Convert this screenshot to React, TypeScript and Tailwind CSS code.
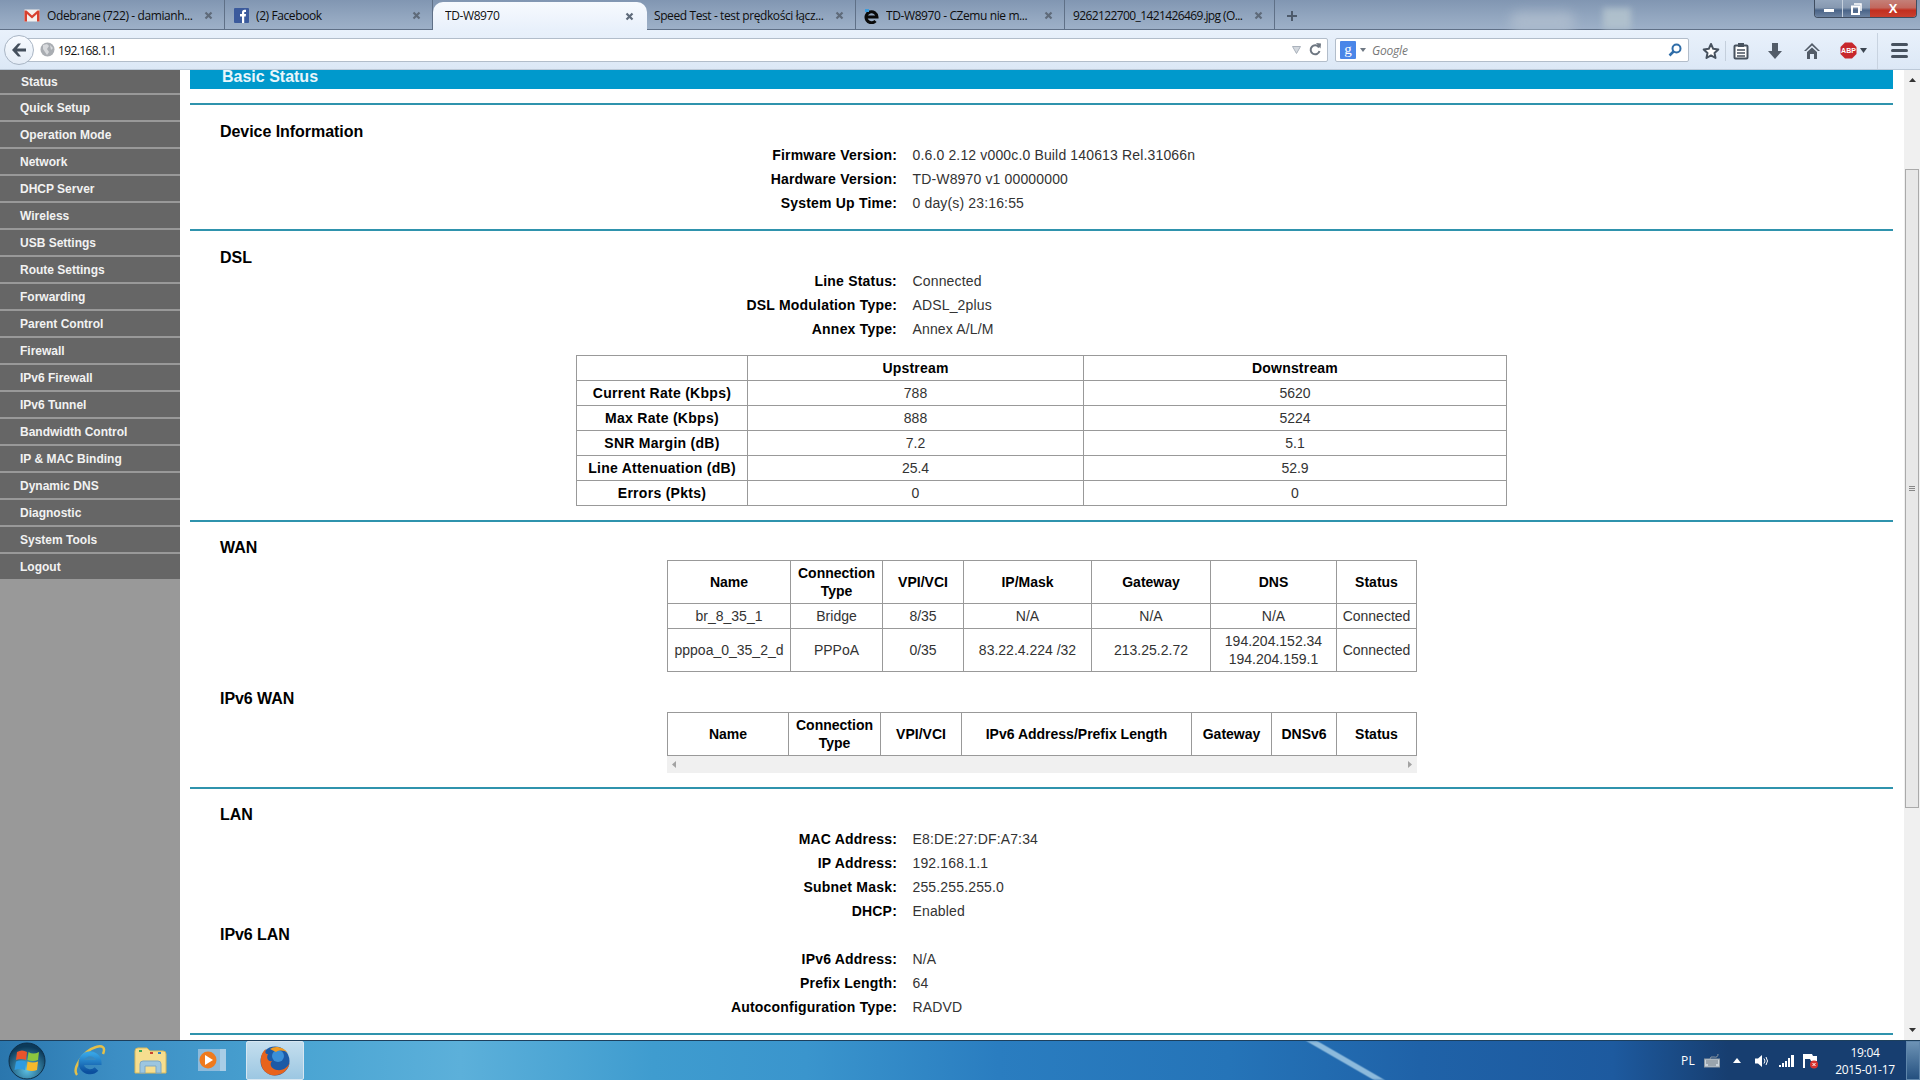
const menu = ['Status', 'Quick Setup', 'Operation Mode', 'Network', 'DHCP Server', 'Wireless', 'USB Settings', 'Route Settings', 'Forwarding', 'Parent Control', 'Firewall', 'IPv6 Firewall', 'IPv6 Tunnel', 'Bandwidth Control', 'IP & MAC Binding', 'Dynamic DNS', 'Diagnostic', 'System Tools', 'Logout'];

const Gmail = () => (
  <svg width="16" height="13" viewBox="0 0 16 13">
    <rect x="0.5" y="0.5" width="15" height="12" fill="#f4f0ee" />
    <path d="M0.5 12.5V1.5H2.5L8 6.5L13.5 1.5H15.5V12.5H13V5L8 9.5L3 5V12.5Z" fill="#d8402f" />
  </svg>
);

const Facebook = () => (
  <svg width="15" height="15" viewBox="0 0 15 15">
    <rect width="15" height="15" rx="1" fill="#3b5a9c" />
    <path d="M8 15V8.5H6V6H8V4.4C8 2.6 9 1.8 10.5 1.8H12V4H11C10.3 4 10.2 4.3 10.2 4.9V6H12L11.7 8.5H10.2V15Z" fill="#fff" />
  </svg>
);

const IeTab = () => (
  <svg width="15" height="16" viewBox="0 0 15 16">
    <path d="M2.5 9H13A5.5 5.5 0 1 0 11.5 13" fill="none" stroke="#0a0a0a" strokeWidth="3" />
    <rect x="1" y="1" width="4" height="3" fill="#3b9bdc" />
  </svg>
);

const Close = () => (
  <svg width="9" height="9" viewBox="0 0 9 9" className="shrink-0">
    <path d="M1.5 1.5L7.5 7.5M7.5 1.5L1.5 7.5" stroke="#5f6b7a" strokeWidth="2.2" />
  </svg>
);

const tabs = [
  { title: 'Odebrane (722) - damianh...', w: 'w-[225px] pl-[24px] tracking-[-0.4px]', icon: <Gmail /> },
  { title: '(2) Facebook', w: 'w-[208px] pl-[9px] tracking-[-0.4px]', icon: <Facebook /> },
  { title: 'TD-W8970', w: 'w-[214px] pl-[12px] tracking-[-0.4px]', active: true },
  { title: 'Speed Test - test prędkości łącz...', w: 'w-[209px] pl-[7px] tracking-[-0.4px]' },
  { title: 'TD-W8970 - CZemu nie m...', w: 'w-[209px] pl-[8px] tracking-[-0.4px]', icon: <IeTab /> },
  { title: '9262122700_1421426469.jpg (O...', w: 'w-[210px] pl-[8px] tracking-[-0.6px]' },
];

const TitleBar = () => (
  <div className="relative flex h-[30px] shrink-0 border-b border-[#5f7087] bg-[linear-gradient(180deg,#8196b2_0%,#93a7c0_60%,#9db0c8_100%)] text-[12px] [font-family:'Open_Sans',sans-serif]">
    <div className="absolute left-[1510px] top-[12px] h-[20px] w-[65px] rounded-full bg-[#b4c1d0] opacity-70 blur-[6px]" />
    <div className="absolute left-[1603px] top-[8px] h-[21px] w-[28px] bg-[#b6c6cf] opacity-80 blur-[3px]" />
    {tabs.map((t) =>
      t.active ? (
        <div key={t.title} className={`relative z-10 mt-[2px] flex h-[28px] items-center gap-[6px] rounded-t-[10px] bg-[linear-gradient(180deg,#f7fafe,#e8f0fb)] pr-[13px] text-[#111] ${t.w}`}>
          <span className="flex-1 truncate">{t.title}</span>
          <Close />
        </div>
      ) : (
        <div key={t.title} className={`relative flex h-[29px] items-center gap-[7px] border-r border-[#5f7087] pr-[11px] pt-[2px] text-[#0d0d0d] ${t.w}`}>
          {t.icon}
          <span className="flex-1 truncate">{t.title}</span>
          <Close />
        </div>
      ),
    )}
    <svg width="12" height="12" viewBox="0 0 12 12" className="relative ml-[11px] mt-[10px]">
      <path d="M6 1V11M1 6H11" stroke="#4d5a6b" strokeWidth="2" />
    </svg>
    <div className="relative ml-auto mr-[3px] flex h-[18px] w-[103px] overflow-hidden rounded-b-[4px] border border-t-0 border-[#3f4d60]">
      <div className="flex w-[28px] items-center justify-center border-r border-[#c5d0dd] bg-[linear-gradient(180deg,#93a5bc_0%,#8799b1_45%,#4a6488_60%,#6d83a1_100%)]">
        <div className="mt-[4px] h-[3px] w-[10px] bg-white" />
      </div>
      <div className="flex w-[27px] items-center justify-center bg-[linear-gradient(180deg,#93a5bc_0%,#8799b1_45%,#4a6488_60%,#6d83a1_100%)]">
        <svg width="11" height="12" viewBox="0 0 11 12">
          <path d="M3 1H10V8" fill="none" stroke="#fff" strokeWidth="1.5" />
          <rect x="1" y="3.5" width="7" height="7.5" fill="none" stroke="#fff" strokeWidth="2" />
        </svg>
      </div>
      <div className="flex flex-1 items-center justify-center bg-[linear-gradient(180deg,#c48078_0%,#c2685e_45%,#c22f1f_60%,#c9402f_100%)] text-[13px] font-bold text-white [font-family:'Liberation_Sans',sans-serif]">X</div>
    </div>
  </div>
);

const ToolIcons = () => (
  <div className="flex h-full items-center pt-[2px]">
    <svg width="18" height="18" viewBox="0 0 18 18" className="ml-[13px]">
      <path d="M9 2L11.2 6.8L16.3 7.4L12.5 10.9L13.5 16L9 13.4L4.5 16L5.5 10.9L1.7 7.4L6.8 6.8Z" fill="#fff" stroke="#47525f" strokeWidth="2" strokeLinejoin="round" />
    </svg>
    <div className="ml-[5px] h-[20px] w-px bg-[#c4cfdc]" />
    <svg width="16" height="18" viewBox="0 0 16 18" className="ml-[7px]">
      <rect x="1.5" y="3.5" width="13" height="13" rx="1" fill="#fff" stroke="#47525f" strokeWidth="2" />
      <rect x="5" y="1" width="6" height="4" fill="#47525f" />
      <path d="M4 8H12M4 11H12M4 14H12" stroke="#47525f" strokeWidth="1.4" />
    </svg>
    <svg width="16" height="18" viewBox="0 0 16 18" className="ml-[18px]">
      <path d="M5 1H11V9H15L8 17L1 9H5Z" fill="#525c68" />
    </svg>
    <svg width="18" height="18" viewBox="0 0 18 18" className="ml-[20px]">
      <path d="M9 1L17 9H15L9 3.5L3 9H1Z" fill="#525c68" />
      <path d="M9 5.5L14 10V17H11V12H7V17H4V10Z" fill="#525c68" />
    </svg>
    <svg width="17" height="17" viewBox="0 0 17 17" className="ml-[19px]">
      <path d="M5 0.5H12L16.5 5V12L12 16.5H5L0.5 12V5Z" fill="#c7272c" />
      <text x="8.5" y="11" textAnchor="middle" fontSize="7" fontWeight="700" fill="#fff" fontFamily="Liberation Sans, sans-serif">ABP</text>
    </svg>
    <svg width="7" height="5" viewBox="0 0 7 5" className="ml-[3px]">
      <path d="M0 0H7L3.5 5Z" fill="#3c4652" />
    </svg>
    <div className="ml-[10px] h-[36px] w-px bg-[#c8d3e0]" />
    <div className="ml-[13px] flex w-[17px] flex-col gap-[3px]">
      <div className="h-[3px] rounded-sm bg-[#47525f]" />
      <div className="h-[3px] rounded-sm bg-[#47525f]" />
      <div className="h-[3px] rounded-sm bg-[#47525f]" />
    </div>
  </div>
);

const Toolbar = () => (
  <div className="relative flex h-[40px] shrink-0 items-center border-b border-[#bcc9d8] bg-[linear-gradient(180deg,#e9f1fb,#dce8f6)]">
    <div className="absolute left-[4px] top-[5px] z-10 flex h-[30px] w-[30px] items-center justify-center rounded-full border border-[#a9b5c4] bg-[linear-gradient(180deg,#f8fbff,#e4ecf6)]">
      <svg width="16" height="14" viewBox="0 0 16 14">
        <path d="M7 0.5L1 7L7 13.5H10L6 8.6H15V5.4H6L10 0.5Z" fill="#444f5c" />
      </svg>
    </div>
    <div className="ml-[16px] flex h-[24px] w-[1312px] items-center rounded-r-[2px] border border-[#b2bdca] bg-white pl-[23px] pr-[6px]">
      <svg width="15" height="15" viewBox="0 0 15 15" className="mr-[3px] shrink-0">
        <circle cx="7.5" cy="7.5" r="7" fill="#a9adb2" />
        <path d="M3 3L7 2L9 4L7 7L9 10L7 13L5 10L3 7ZM10 3L13 6L11 8Z" fill="#d7d9dc" />
      </svg>
      <span className="flex-1 pt-[2px] text-[12px] text-[#111] tracking-[-0.6px] [font-family:'Open_Sans',sans-serif]">192.168.1.1</span>
      <svg width="9" height="8" viewBox="0 0 9 8" className="mr-[8px]">
        <path d="M0.5 0.5H8.5L4.5 7.5Z" fill="#d3d8de" stroke="#aab2bc" />
      </svg>
      <svg width="12" height="13" viewBox="0 0 12 13">
        <path d="M10 4.5A4.5 4.5 0 1 0 10.5 8" fill="none" stroke="#6d7681" strokeWidth="2" />
        <path d="M7 0L12 0.5L11.5 5.5Z" fill="#6d7681" />
      </svg>
    </div>
    <div className="ml-[7px] flex h-[24px] w-[354px] items-center rounded-[2px] border border-[#b2bdca] bg-white pl-[4px] pr-[6px]">
      <div className="flex h-[18px] w-[16px] items-center justify-center rounded-[1px] bg-[#4a86e8] text-[15px] leading-none text-white [font-family:'Liberation_Serif',serif]">g</div>
      <svg width="6" height="4" viewBox="0 0 6 4" className="ml-[4px]">
        <path d="M0 0H6L3 4Z" fill="#6f7883" />
      </svg>
      <span className="ml-[6px] flex-1 pt-[2px] text-[12px] italic tracking-[-0.2px] text-[#777] [font-family:'Open_Sans',sans-serif]">Google</span>
      <svg width="14" height="14" viewBox="0 0 14 14">
        <circle cx="8.5" cy="5.5" r="4" fill="#fff" stroke="#2f6da8" strokeWidth="2" />
        <path d="M5.5 8.5L1.5 12.5" stroke="#2f6da8" strokeWidth="2.5" />
      </svg>
    </div>
    <ToolIcons />
  </div>
);

const Sidebar = () => (
  <div className="flex w-[180px] shrink-0 flex-col gap-[2px] bg-[#999] text-[12px] font-bold text-[#f2f2f2]">
    {menu.map((m, i) => (
      <div key={m} className={i === 0 ? 'flex h-[23px] items-center bg-[#666] pl-[21px]' : 'flex h-[25px] items-center bg-[#666] pl-[20px]'}>
        {m}
      </div>
    ))}
  </div>
);

const Heading = ({ children, className }: { children: string; className: string }) => (
  <div className={`h-[20px] pl-[30px] text-[16px] font-bold leading-[20px] tracking-[-0.05px] text-black ${className}`}>{children}</div>
);

const Info = ({ rows, className }: { rows: string[][]; className?: string }) => (
  <div className={className}>
    {rows.map(([k, v]) => (
      <div key={k} className="flex h-[24px] items-center text-[14px]">
        <div className="w-[707px] text-right font-bold tracking-[0.2px] text-black">{k}</div>
        <div className="ml-[15.5px] tracking-[0.15px] text-[#333]">{v}</div>
      </div>
    ))}
  </div>
);

const cell = 'border border-[#999] p-0 text-center text-[14px] font-normal text-[#333]';
const head = 'border border-[#999] p-0 text-center text-[14px] font-bold text-black leading-[18px]';

const dsl = [
  ['Current Rate (Kbps)', '788', '5620'],
  ['Max Rate (Kbps)', '888', '5224'],
  ['SNR Margin (dB)', '7.2', '5.1'],
  ['Line Attenuation (dB)', '25.4', '52.9'],
  ['Errors (Pkts)', '0', '0'],
];

const DslTable = () => (
  <table className="ml-[386px] mt-[14px] w-[931px] table-fixed border-collapse">
    <thead>
      <tr className="h-[25px]">
        <th className={`${head} w-[171px]`} />
        <th className={`${head} w-[336px] tracking-[0.2px]`}>Upstream</th>
        <th className={`${head} tracking-[0.2px]`}>Downstream</th>
      </tr>
    </thead>
    <tbody>
      {dsl.map(([a, b, c]) => (
        <tr key={a} className="h-[25px]">
          <td className={`${head} tracking-[0.28px]`}>{a}</td>
          <td className={cell}>{b}</td>
          <td className={cell}>{c}</td>
        </tr>
      ))}
    </tbody>
  </table>
);

const WanTable = () => (
  <table className="ml-[477px] mt-[2px] w-[750px] table-fixed border-collapse">
    <thead>
      <tr className="h-[43px]">
        <th className={`${head} w-[123px]`}>Name</th>
        <th className={`${head} w-[92px]`}>Connection Type</th>
        <th className={`${head} w-[81px]`}>VPI/VCI</th>
        <th className={`${head} w-[128px]`}>IP/Mask</th>
        <th className={`${head} w-[119px]`}>Gateway</th>
        <th className={`${head} w-[126px]`}>DNS</th>
        <th className={head}>Status</th>
      </tr>
    </thead>
    <tbody>
      <tr className="h-[25px]">
        <td className={cell}>br_8_35_1</td>
        <td className={cell}>Bridge</td>
        <td className={cell}>8/35</td>
        <td className={cell}>N/A</td>
        <td className={cell}>N/A</td>
        <td className={cell}>N/A</td>
        <td className={cell}>Connected</td>
      </tr>
      <tr className="h-[43px]">
        <td className={cell}>pppoa_0_35_2_d</td>
        <td className={cell}>PPPoA</td>
        <td className={cell}>0/35</td>
        <td className={cell}>83.22.4.224 /32</td>
        <td className={cell}>213.25.2.72</td>
        <td className={`${cell} leading-[18px]`}>194.204.152.34<br />194.204.159.1</td>
        <td className={cell}>Connected</td>
      </tr>
    </tbody>
  </table>
);

const Wan6Table = () => (
  <div className="ml-[477px] mt-[3px] w-[750px]">
    <table className="w-full table-fixed border-collapse">
      <thead>
        <tr className="h-[43px]">
          <th className={`${head} w-[121px]`}>Name</th>
          <th className={`${head} w-[92px]`}>Connection Type</th>
          <th className={`${head} w-[81px]`}>VPI/VCI</th>
          <th className={`${head} w-[230px]`}>IPv6 Address/Prefix Length</th>
          <th className={`${head} w-[80px]`}>Gateway</th>
          <th className={`${head} w-[65px]`}>DNSv6</th>
          <th className={head}>Status</th>
        </tr>
      </thead>
    </table>
    <div className="flex h-[17px] items-center justify-between bg-[#f0f0f0] px-[5px]">
      <svg width="4" height="7" viewBox="0 0 4 7"><path d="M4 0V7L0 3.5Z" fill="#a3a3a3" /></svg>
      <svg width="4" height="7" viewBox="0 0 4 7"><path d="M0 0V7L4 3.5Z" fill="#a3a3a3" /></svg>
    </div>
  </div>
);

const Content = () => (
  <div className="ml-[10px] w-[1703px] shrink-0">
    <div className="flex h-[19px] items-end overflow-hidden bg-[#0099cc] pl-[32px]">
      <span className="mb-[2px] text-[16px] font-bold leading-[20px] text-[#e8f6fb]">Basic Status</span>
    </div>
    <div className="mt-[14px] border-t-2 border-[#2f93ad] pb-[14px] pt-[17px]">
      <Heading className="">Device Information</Heading>
      <Info className="mt-[1px]" rows={[['Firmware Version:', '0.6.0 2.12 v000c.0 Build 140613 Rel.31066n'], ['Hardware Version:', 'TD-W8970 v1 00000000'], ['System Up Time:', '0 day(s) 23:16:55']]} />
    </div>
    <div className="border-t-2 border-[#2f93ad] pb-[14px] pt-[17px]">
      <Heading className="">DSL</Heading>
      <Info className="mt-[1px]" rows={[['Line Status:', 'Connected'], ['DSL Modulation Type:', 'ADSL_2plus'], ['Annex Type:', 'Annex A/L/M']]} />
      <DslTable />
    </div>
    <div className="border-t-2 border-[#2f93ad] pb-[14px] pt-[16px]">
      <Heading className="">WAN</Heading>
      <WanTable />
      <Heading className="mt-[17px]">IPv6 WAN</Heading>
      <Wan6Table />
    </div>
    <div className="border-t-2 border-[#2f93ad] pb-[14px] pt-[16px]">
      <Heading className="">LAN</Heading>
      <Info className="mt-[2px]" rows={[['MAC Address:', 'E8:DE:27:DF:A7:34'], ['IP Address:', '192.168.1.1'], ['Subnet Mask:', '255.255.255.0'], ['DHCP:', 'Enabled']]} />
      <Heading className="mt-[2px]">IPv6 LAN</Heading>
      <Info className="mt-[2px]" rows={[['IPv6 Address:', 'N/A'], ['Prefix Length:', '64'], ['Autoconfiguration Type:', 'RADVD']]} />
    </div>
    <div className="border-t-2 border-[#2f93ad]" />
  </div>
);

const Scrollbar = () => (
  <div className="ml-auto flex w-[16px] shrink-0 flex-col items-center bg-[#f0f0f0]">
    <svg width="7" height="4" viewBox="0 0 7 4" className="mt-[8px]"><path d="M0 4H7L3.5 0Z" fill="#333" /></svg>
    <div className="mt-[87px] flex h-[639px] w-[14px] items-center justify-center border border-[#aaa] bg-[#e8e8e8]">
      <div className="flex w-[6px] flex-col gap-px">
        <div className="h-px bg-[#888]" />
        <div className="h-px bg-[#888]" />
        <div className="h-px bg-[#888]" />
      </div>
    </div>
    <svg width="7" height="4" viewBox="0 0 7 4" className="mt-[220px]"><path d="M0 0H7L3.5 4Z" fill="#333" /></svg>
  </div>
);

const Orb = () => (
  <svg width="38" height="38" viewBox="0 0 38 38">
    <defs>
      <radialGradient id="orb" cx="50%" cy="75%" r="65%"><stop offset="0" stopColor="#5cc0e4" /><stop offset="1" stopColor="#0c3a5a" /></radialGradient>
    </defs>
    <circle cx="19" cy="19" r="18" fill="url(#orb)" stroke="#0e2f49" />
    <path d="M9 10Q14 7 19 10L18 18Q13 16 8 18Z" fill="#e8542c" />
    <path d="M20.500 10Q25 13 31 10L30 18Q25 20 19.500 18Z" fill="#8cc63f" />
    <path d="M8 19.500Q13 17.500 18 19.500L17 28Q12 26 6.500 28Z" fill="#2f9be0" />
    <path d="M19.500 19.500Q25 21.500 30 19.500L29 28Q24 30 18.500 28Z" fill="#f6b92c" />
  </svg>
);

const IeIcon = () => (
  <svg width="34" height="34" viewBox="0 0 34 34">
    <defs>
      <linearGradient id="iee" x1="0" y1="0" x2="0" y2="1"><stop offset="0" stopColor="#36a3e4" /><stop offset="1" stopColor="#0b4f9e" /></linearGradient>
    </defs>
    <path d="M5 31C0 25 11 7 24 3C30 1 34 3 31 10" fill="none" stroke="#e4c04a" strokeWidth="2.5" />
    <path d="M9 18.500H27A9 9 0 1 0 24.500 25" fill="none" stroke="url(#iee)" strokeWidth="5" />
  </svg>
);

const FolderIcon = () => (
  <svg width="34" height="30" viewBox="0 0 34 30">
    <path d="M1 5Q1 2 4 2H13L16 5H29Q32 5 32 8V27H1Z" fill="#f6de8f" stroke="#d9b95a" />
    <rect x="5" y="4" width="3" height="2" fill="#3aa655" />
    <rect x="16" y="6" width="3" height="2" fill="#c8432f" />
    <rect x="24" y="6" width="3" height="2" fill="#2f84c9" />
    <path d="M6 27V18Q6 15 9 15H24Q27 15 27 18V27H22V20H11V27Z" fill="#9cc6e0" stroke="#7fa8c4" />
  </svg>
);

const WmpIcon = () => (
  <svg width="28" height="26" viewBox="0 0 28 26">
    <rect x="3" y="1" width="25" height="22" fill="#a9cde6" />
    <rect x="0" y="1" width="22" height="22" fill="#8dbbdc" />
    <circle cx="10" cy="12" r="8.5" fill="#ee7a1e" />
    <path d="M7 7L15 12L7 17Z" fill="#fff" />
  </svg>
);

const FirefoxIcon = () => (
  <svg width="32" height="32" viewBox="0 0 32 32">
    <circle cx="16" cy="16" r="14.5" fill="#1d5aa6" />
    <circle cx="19" cy="11" r="6" fill="#3a8fd8" />
    <path d="M3 9C0 16 2 27 12 30C21 32 30 26 31 16C30 22 24 26 18 25C12 24 10 19 13 16C9 17 7 13 9 9C6 9 6 7 7 4C5 5 4 7 3 9Z" fill="#e8631c" />
    <path d="M11 4C16 0 25 2 29 8C25 5 20 5 17 7Z" fill="#f29a1f" />
  </svg>
);

const Tray = () => (
  <div className="ml-auto flex h-full items-center text-white">
    <span className="text-[12px] tracking-[0.3px]">PL</span>
    <svg width="16" height="14" viewBox="0 0 16 14" className="ml-[9px]">
      <rect x="0.5" y="5" width="15" height="8" fill="#c9d2da" stroke="#8e99a3" />
      <path d="M2 7H14M2 9H14M4 11H12" stroke="#6b7680" />
      <path d="M6 5Q6 2 10 3T14 0" fill="none" stroke="#8e99a3" />
    </svg>
    <svg width="8" height="5" viewBox="0 0 8 5" className="ml-[13px]"><path d="M0 5H8L4 0Z" fill="#fff" /></svg>
    <svg width="15" height="14" viewBox="0 0 15 14" className="ml-[14px]">
      <path d="M0 4.5H3L7 1V13L3 9.5H0Z" fill="#fff" />
      <path d="M9 4.5Q11 7 9 9.5M11 3Q14 7 11 11" fill="none" stroke="#fff" />
    </svg>
    <svg width="15" height="13" viewBox="0 0 15 13" className="ml-[9px]">
      <path d="M0 11H2V13H0ZM3 9H5V13H3ZM6 7H8V13H6ZM9 4H11V13H9ZM12 1H15V13H12Z" fill="#fff" />
    </svg>
    <svg width="16" height="16" viewBox="0 0 16 16" className="ml-[9px]">
      <path d="M1 1V15" stroke="#fff" strokeWidth="2" />
      <path d="M2 1H9L10 3H14V8H8L7 6H2Z" fill="#fff" />
      <circle cx="11" cy="11.5" r="4" fill="#d9332f" />
      <path d="M9.5 10L12.5 13M12.500 10L9.500 13" stroke="#fff" />
    </svg>
    <div className="ml-[8px] w-[76px] text-center text-[12px] leading-[17px] tracking-[-0.3px]">
      <div>19:04</div>
      <div>2015-01-17</div>
    </div>
    <div className="ml-[3px] h-full w-[14px] border border-[#5f86ab] bg-[linear-gradient(180deg,#6d93b5,#24507f)]" />
  </div>
);

const Taskbar = () => (
  <div className="relative flex h-[40px] shrink-0 items-center overflow-hidden border-t border-[#1d3f5c] bg-[linear-gradient(90deg,#2a76ad_0%,#3c8ec4_6%,#4ba5d3_16%,#5cb0da_24%,#3f9ccf_34%,#3a95cd_42%,#2a7dc0_52%,#2574b8_64%,#1f62a8_74%,#1d5a9f_84%,#173e70_90%,#173e70_100%)] [font-family:'Open_Sans',sans-serif]">
    <div className="absolute left-[1340px] top-0 h-full w-[11px] skew-x-[60deg] bg-[#a8cfe8] opacity-80 blur-[1px]" />
    <div className="relative ml-[8px] flex w-[38px] justify-center"><Orb /></div>
    <div className="relative ml-[26px]"><IeIcon /></div>
    <div className="relative ml-[28px]"><FolderIcon /></div>
    <div className="relative ml-[30px]"><WmpIcon /></div>
    <div className="relative ml-[20px] flex h-[39px] w-[58px] items-center justify-center rounded-[2px] border border-[#d6e6f1] bg-[linear-gradient(180deg,#c4deee,#9cc7e2)]">
      <FirefoxIcon />
    </div>
    <div className="relative ml-auto h-full"><Tray /></div>
  </div>
);

export default function App() {
  return (
    <div className="flex h-[1080px] w-[1920px] flex-col overflow-hidden bg-white [font-family:'Liberation_Sans',Arial,sans-serif]">
      <TitleBar />
      <Toolbar />
      <div className="flex h-[970px] shrink-0 overflow-hidden">
        <Sidebar />
        <Content />
        <Scrollbar />
      </div>
      <Taskbar />
    </div>
  );
}
